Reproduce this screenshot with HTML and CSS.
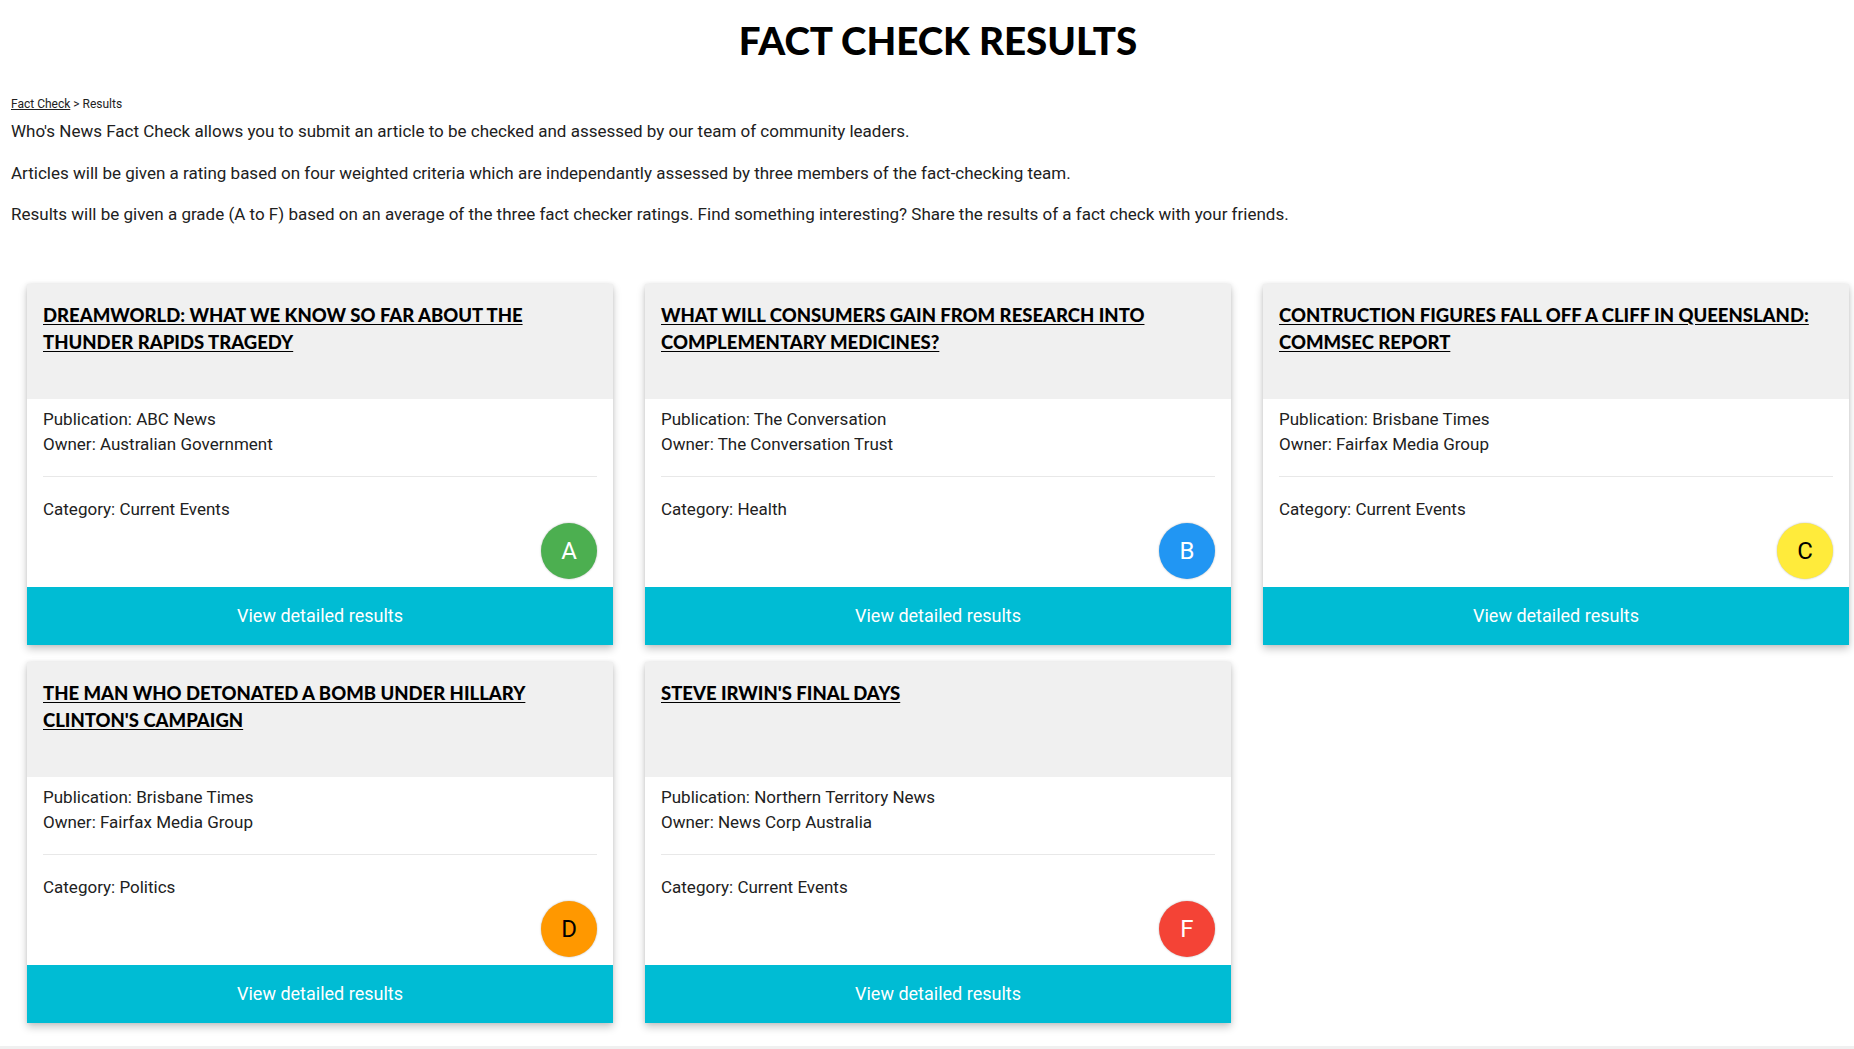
FILE: index.html
```html
<!DOCTYPE html>
<html lang="en">
<head>
<meta charset="utf-8">
<title>Fact Check Results</title>
<link rel="stylesheet" href="styles.css">
</head>
<body>
<header class="page-header">
  <h1 class="page-title">Fact Check Results</h1>
</header>
<section class="intro">
  <nav class="breadcrumb"><a href="#" class="crumb-link">Fact Check</a> &gt; Results</nav>
  <p class="intro-text">Who's News Fact Check allows you to submit an article to be checked and assessed by our team of community leaders.</p>
  <p class="intro-text">Articles will be given a rating based on four weighted criteria which are independantly assessed by three members of the fact-checking team.</p>
  <p class="intro-text">Results will be given a grade (A to F) based on an average of the three fact checker ratings. Find something interesting? Share the results of a fact check with your friends.</p>
</section>
<main class="card-grid">
  <article class="card">
    <div class="card-head"><a href="#" class="card-title">Dreamworld: What we know so far about the Thunder Rapids tragedy</a></div>
    <div class="card-body">
      <div class="meta"><div>Publication: ABC News</div><div>Owner: Australian Government</div></div>
      <hr class="divider">
      <div class="category">Category: Current Events</div>
      <div class="grade-row"><span class="grade grade-a">A</span></div>
    </div>
    <a href="#" class="card-btn">View detailed results</a>
  </article>
  <article class="card">
    <div class="card-head"><a href="#" class="card-title">What will consumers gain from research into complementary medicines?</a></div>
    <div class="card-body">
      <div class="meta"><div>Publication: The Conversation</div><div>Owner: The Conversation Trust</div></div>
      <hr class="divider">
      <div class="category">Category: Health</div>
      <div class="grade-row"><span class="grade grade-b">B</span></div>
    </div>
    <a href="#" class="card-btn">View detailed results</a>
  </article>
  <article class="card">
    <div class="card-head"><a href="#" class="card-title">Contruction figures fall off a cliff in Queensland: CommSec report</a></div>
    <div class="card-body">
      <div class="meta"><div>Publication: Brisbane Times</div><div>Owner: Fairfax Media Group</div></div>
      <hr class="divider">
      <div class="category">Category: Current Events</div>
      <div class="grade-row"><span class="grade grade-c">C</span></div>
    </div>
    <a href="#" class="card-btn">View detailed results</a>
  </article>
  <article class="card">
    <div class="card-head"><a href="#" class="card-title">The man who detonated a bomb under Hillary Clinton's campaign</a></div>
    <div class="card-body">
      <div class="meta"><div>Publication: Brisbane Times</div><div>Owner: Fairfax Media Group</div></div>
      <hr class="divider">
      <div class="category">Category: Politics</div>
      <div class="grade-row"><span class="grade grade-d">D</span></div>
    </div>
    <a href="#" class="card-btn">View detailed results</a>
  </article>
  <article class="card">
    <div class="card-head"><a href="#" class="card-title">Steve Irwin's final days</a></div>
    <div class="card-body">
      <div class="meta"><div>Publication: Northern Territory News</div><div>Owner: News Corp Australia</div></div>
      <hr class="divider">
      <div class="category">Category: Current Events</div>
      <div class="grade-row"><span class="grade grade-f">F</span></div>
    </div>
    <a href="#" class="card-btn">View detailed results</a>
  </article>
</main>
<footer class="footer"></footer>
</body>
</html>
```
FILE: styles.css
```css
* { box-sizing: border-box; }
html, body { margin: 0; padding: 0; background: #fff; }
body {
  font-family: Roboto, "Liberation Sans", Arial, sans-serif;
  color: #212121;
  font-size: 17px;
}
.page-header { display: flex; justify-content: center; padding: 16px 0 0 22px; }
.page-title {
  margin: 0;
  font-family: Lato, "Open Sans", sans-serif;
  font-weight: 900;
  font-size: 38.5px;
  line-height: 48px;
  text-transform: uppercase;
  color: #000;
}
.intro { padding: 33px 11px 0; }
.breadcrumb { font-size: 12px; line-height: 14px; color: #212121; }
.crumb-link { color: #212121; text-decoration: underline; }
.intro-text { margin: 8px 0 16px; line-height: 25.6px; font-size: 17px; }
.intro-text + .intro-text { margin-top: 0; }
.card-grid {
  display: grid;
  grid-template-columns: repeat(3, 586px);
  column-gap: 32px;
  row-gap: 17px;
  padding: 40px 27px 0;
}
.card {
  display: flex;
  flex-direction: column;
  background: #fff;
  box-shadow: 0 4px 8px rgba(0,0,0,0.22), 0 0 4px rgba(0,0,0,0.08);
}
.card-head {
  height: 115px;
  background: #f0f0f0;
  padding: 18px 16px 0;
}
.card-title {
  font-family: Lato, "Open Sans", sans-serif;
  font-weight: 900;
  font-size: 18.5px;
  line-height: 27px;
  text-transform: uppercase;
  color: #000;
  text-decoration: underline;
  text-underline-offset: 2px;
}
.card-body {
  height: 188px;
  padding: 8px 16px 0;
  display: flex;
  flex-direction: column;
}
.meta { line-height: 25px; }
.divider { border: 0; border-top: 1px solid #e8e8e8; margin: 19px 0 0; height: 0; }
.category { margin-top: 20px; line-height: 25px; }
.grade-row { display: flex; justify-content: flex-end; margin-top: 1px; }
.grade {
  width: 56px;
  height: 56px;
  border-radius: 50%;
  display: flex;
  align-items: center;
  justify-content: center;
  font-size: 24px;
  color: #fff;
  box-shadow: 0 0 2px rgba(0,0,0,0.3);
}
.grade-a { background: #4caf50; }
.grade-b { background: #2196f3; }
.grade-c { background: #ffeb3b; color: #000; }
.grade-d { background: #ff9800; color: #000; }
.grade-f { background: #f44336; }
.card-btn {
  height: 58px;
  background: #00bcd4;
  color: #fff;
  display: flex;
  align-items: center;
  justify-content: center;
  font-size: 18px;
  text-decoration: none;
}
.footer { margin-top: 23px; height: 40px; background: #f0f0f0; }
```
